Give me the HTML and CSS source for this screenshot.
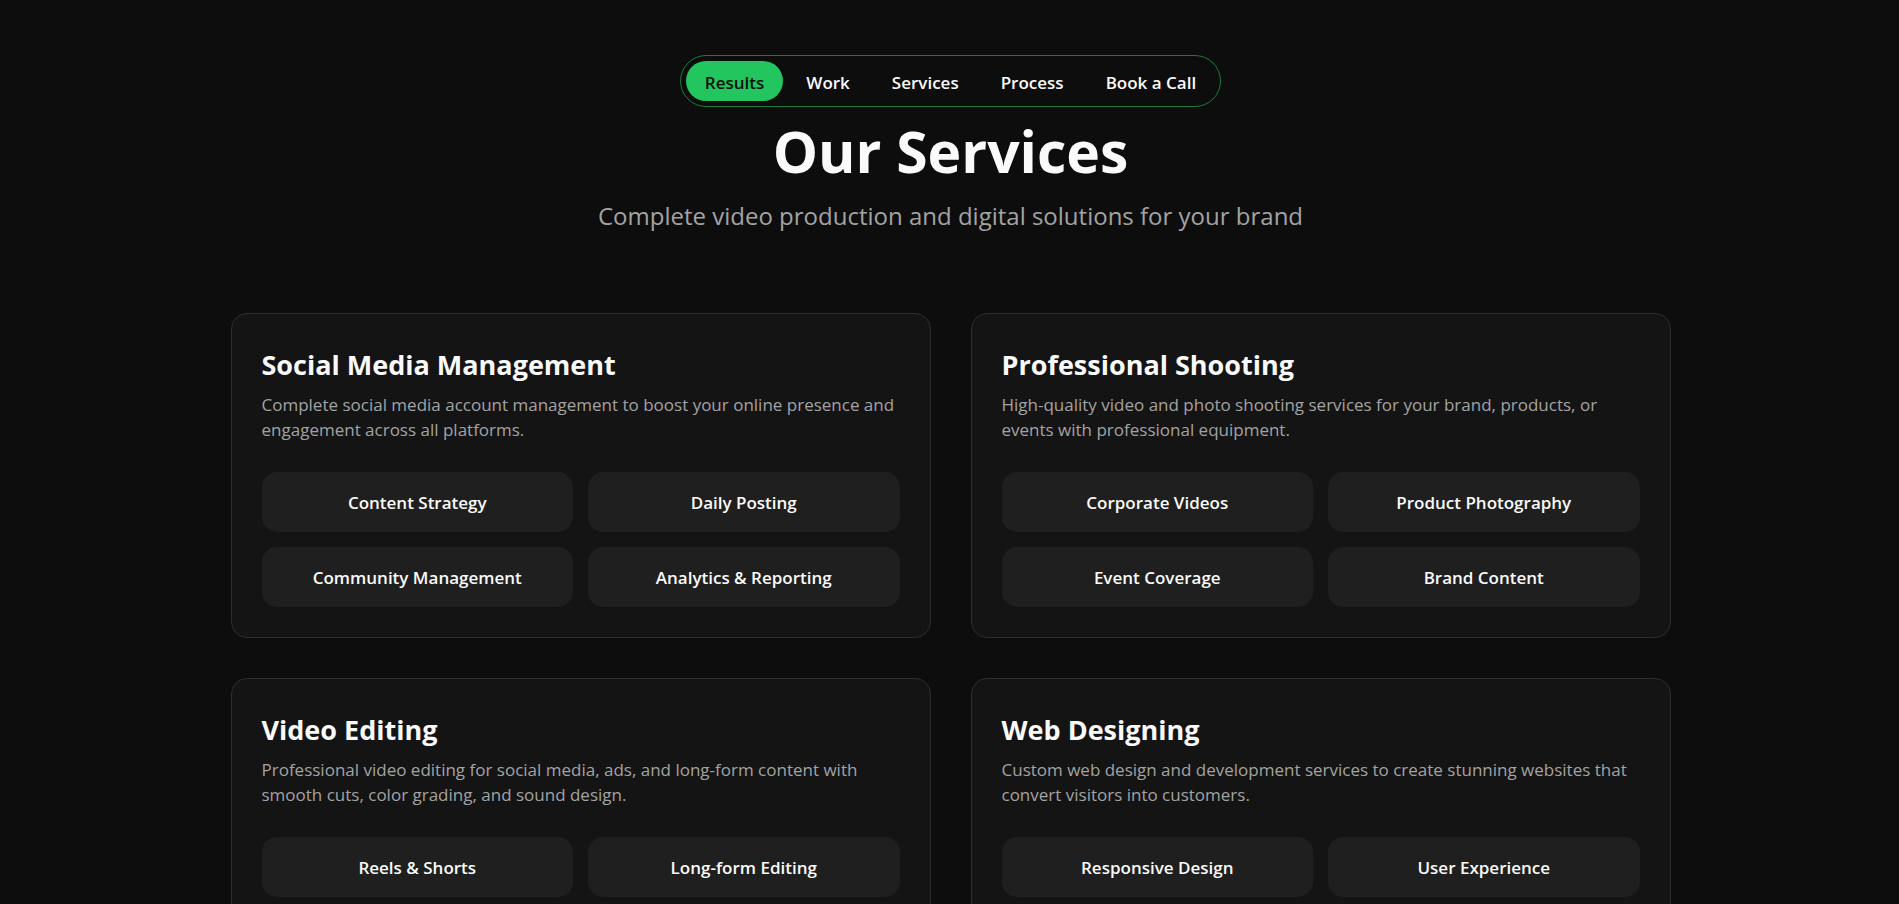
FILE: index.html
```html
<!DOCTYPE html>
<html lang="en">
<head>
<meta charset="utf-8">
<meta name="viewport" content="width=device-width, initial-scale=1">
<title>Our Services</title>
<link rel="stylesheet" href="styles.css">
</head>
<body>
<header class="topbar">
  <nav class="nav" aria-label="Main">
    <a class="nav-link nav-link-active" href="#results">Results</a>
    <a class="nav-link" href="#work">Work</a>
    <a class="nav-link" href="#services">Services</a>
    <a class="nav-link" href="#process">Process</a>
    <a class="nav-link" href="#book">Book a Call</a>
  </nav>
</header>
<main class="services" id="services">
  <div class="intro">
    <h1 class="title">Our Services</h1>
    <p class="subtitle">Complete video production and digital solutions for your brand</p>
  </div>
  <div class="cards">
    <article class="card">
      <h2 class="card-title">Social Media Management</h2>
      <p class="card-text">Complete social media account management to boost your online presence and engagement across all platforms.</p>
      <ul class="chips">
        <li class="chip">Content Strategy</li>
        <li class="chip">Daily Posting</li>
        <li class="chip">Community Management</li>
        <li class="chip">Analytics &amp; Reporting</li>
      </ul>
    </article>
    <article class="card">
      <h2 class="card-title">Professional Shooting</h2>
      <p class="card-text">High-quality video and photo shooting services for your brand, products, or events with professional equipment.</p>
      <ul class="chips">
        <li class="chip">Corporate Videos</li>
        <li class="chip">Product Photography</li>
        <li class="chip">Event Coverage</li>
        <li class="chip">Brand Content</li>
      </ul>
    </article>
    <article class="card">
      <h2 class="card-title">Video Editing</h2>
      <p class="card-text">Professional video editing for social media, ads, and long-form content with smooth cuts, color grading, and sound design.</p>
      <ul class="chips">
        <li class="chip">Reels &amp; Shorts</li>
        <li class="chip">Long-form Editing</li>
      </ul>
    </article>
    <article class="card">
      <h2 class="card-title">Web Designing</h2>
      <p class="card-text">Custom web design and development services to create stunning websites that convert visitors into customers.</p>
      <ul class="chips">
        <li class="chip">Responsive Design</li>
        <li class="chip">User Experience</li>
      </ul>
    </article>
  </div>
</main>
</body>
</html>
```
FILE: styles.css
```css
* {
  box-sizing: border-box;
  margin: 0;
  padding: 0;
}

html {
  background: #0d0d0d;
  height: 100%;
  overflow: hidden;
}

body {
  height: 100%;
  overflow: hidden;
  padding-left: 2px;
  background: #0d0d0d;
  color: #fafafa;
  font-family: "Open Sans", "Noto Sans", sans-serif;
}

.topbar {
  display: flex;
  justify-content: center;
  padding-top: 55px;
}

.nav {
  display: flex;
  gap: 4px;
  padding: 5px;
  border: 1px solid #1b7a3e;
  border-radius: 26px;
}

.nav-link {
  height: 40px;
  padding: 0 19px;
  border-radius: 20px;
  color: #fafafa;
  font-size: 17px;
  font-weight: 600;
  line-height: 43px;
  text-decoration: none;
}

.nav-link-active {
  background: #22c55e;
  color: #0d0d0d;
}

.intro {
  padding-top: 10px;
  text-align: center;
}

.title {
  font-size: 57px;
  font-weight: 700;
  line-height: 68px;
}

.subtitle {
  margin-top: 12px;
  color: #a3a3a3;
  font-size: 24px;
  line-height: 38px;
}

.cards {
  display: grid;
  grid-template-columns: 1fr 1fr;
  gap: 40px;
  max-width: 1440px;
  margin: 78px auto 0;
}

.card {
  padding: 30px;
  border: 1px solid #2e2e2e;
  border-radius: 16px;
  background: #141414;
}

.card-title {
  font-size: 27px;
  font-weight: 700;
  line-height: 42px;
}

.card-text {
  margin-top: 6px;
  color: #a3a3a3;
  font-size: 17px;
  line-height: 25px;
}

.chips {
  display: grid;
  grid-template-columns: 1fr 1fr;
  gap: 15px;
  margin-top: 30px;
  list-style: none;
}

.chip {
  padding-top: 2px;
  border-radius: 15px;
  background: #1f1f1f;
  font-size: 17px;
  font-weight: 600;
  line-height: 58px;
  text-align: center;
}
```
